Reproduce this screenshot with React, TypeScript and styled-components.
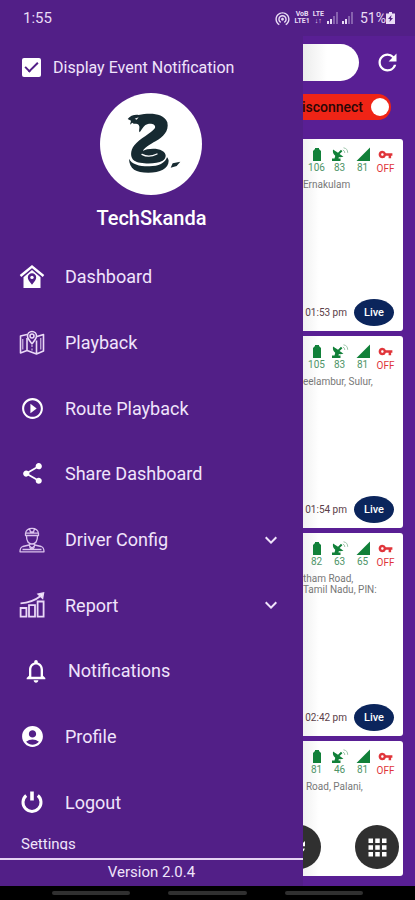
import React from "react";
import styled, { createGlobalStyle } from "styled-components";
import {
  MdAccountCircle,
  MdApps,
  MdExpandMore,
  MdNotificationsNone,
  MdPlayCircleOutline,
  MdRefresh,
  MdShare,
  MdVpnKey,
  MdWifiTethering,
} from "react-icons/md";

const GlobalStyle = createGlobalStyle`
  *, *::before, *::after { box-sizing: border-box; }
  body { margin: 0; background: #521f87; font-family: Roboto, "Liberation Sans", sans-serif; }
  button { font-family: inherit; border: 0; padding: 0; background: none; color: inherit; cursor: pointer; }
  svg { display: block; flex: none; }
`;

const Screen = styled.div`
  display: flex;
  flex-direction: column;
  min-height: 100vh;
  background: #591f94;
`;

const StatusBar = styled.header`
  display: flex;
  align-items: center;
  justify-content: space-between;
  height: 36px;
  padding: 0 20px 0 23px;
  background: #521f87;
  color: #e9dcf5;
  font-size: 15px;
`;

const StatusIcons = styled.div`
  display: flex;
  align-items: center;
  gap: 3px;
`;

const NetworkLabel = styled.span`
  font-size: 7px;
  line-height: 7px;
  font-weight: 700;
  text-align: center;
`;

const BatteryLevel = styled.span`
  display: flex;
  align-items: center;
  margin-left: 3px;
  font-size: 14px;
`;

const Body = styled.div`
  display: flex;
  flex: 1;
`;

const Drawer = styled.aside`
  display: flex;
  flex-direction: column;
  flex: 0 0 73%;
  background: #521f87;
  color: #f0e4fb;
`;

const DrawerHeader = styled.div`
  display: flex;
  flex-direction: column;
  align-items: center;
  height: 208px;
  padding-top: 19px;
`;

const EventToggle = styled.label`
  display: flex;
  align-items: center;
  align-self: stretch;
  gap: 12px;
  height: 24px;
  padding-left: 22px;
  font-size: 16px;
  cursor: pointer;
`;

const CheckInput = styled.input`
  appearance: none;
  display: grid;
  place-items: center;
  width: 19px;
  height: 19px;
  margin: 0;
  border-radius: 2px;
  background: #fff;

  &:checked::before {
    content: "";
    width: 13px;
    height: 7px;
    border-left: 2px solid #521f87;
    border-bottom: 2px solid #521f87;
    rotate: -45deg;
    translate: 0 -2px;
  }
`;

const Avatar = styled.div`
  width: 102px;
  height: 102px;
  margin-top: 14px;
  border-radius: 50%;
  background: #fff;
`;

const UserName = styled.h1`
  margin: 9px 0 0;
  font-size: 20px;
  line-height: 28px;
  font-weight: 500;
  color: #fff;
`;

const Menu = styled.nav`
  display: flex;
  flex-direction: column;
  flex: 1;
`;

const MenuItem = styled.button<{ $inset?: boolean }>`
  display: grid;
  grid-template-columns: 26px 1fr 24px;
  align-items: center;
  column-gap: 20px;
  flex: 1;
  padding: 0 20px 0 ${(p) => (p.$inset ? 22 : 19)}px;
  font-size: 18px;
  text-align: left;
`;

const MenuIcon = styled.span`
  display: grid;
  place-items: center;
  color: #fff;
`;

const SectionTitle = styled.h2`
  height: 15px;
  margin: 0 0 8px;
  padding-left: 21px;
  overflow: hidden;
  font-size: 15px;
  line-height: 18px;
  font-weight: 400;
`;

const Version = styled.footer`
  height: 28px;
  border-top: 2px solid #e5d3f3;
  font-size: 15px;
  line-height: 25px;
  text-align: center;
`;

const Content = styled.main`
  position: relative;
  display: flex;
  flex-direction: column;
  flex: 1;
  min-width: 0;
  padding: 8px 12px 10px 0;
`;

const SearchRow = styled.div`
  display: flex;
  align-items: center;
  gap: 15px;
  height: 37px;
`;

const SearchInput = styled.input`
  flex: 1;
  min-width: 0;
  height: 37px;
  padding: 0 16px;
  border: 0;
  border-radius: 0 19px 19px 0;
  background: linear-gradient(90deg, #ececec, #fff 24px);
  font: inherit;
`;

const RefreshButton = styled.button`
  color: #fff;
  width: 27px;
  margin-right: 2px;
`;

const ConnectionSwitch = styled.button`
  display: flex;
  align-items: center;
  justify-content: flex-end;
  gap: 8px;
  height: 26px;
  margin: 13px 12px 19px 0;
  padding-right: 2px;
  overflow: hidden;
  border-radius: 0 13px 13px 0;
  background: #ef2416;
  color: #2a0706;
  font-size: 14px;
  font-weight: 500;
`;

const Knob = styled.span`
  flex: none;
  width: 18px;
  height: 18px;
  border-radius: 50%;
  background: #fff;
`;

const CardList = styled.div`
  display: flex;
  flex-direction: column;
  flex: 1;
  gap: 5px;
`;

const Card = styled.article<{ $height?: number }>`
  display: flex;
  flex-direction: column;
  flex: ${(p) => (p.$height ? `0 0 ${p.$height}px` : "1")};
  padding: 8px 9px 5px 0;
  border-radius: 0 3px 3px 0;
  background: linear-gradient(90deg, #f1f1f1, #fff 16px);
  overflow: hidden;
`;

const Gauges = styled.div`
  display: grid;
  grid-template-columns: repeat(4, 23px);
  justify-content: end;
  margin-right: -3px;
`;

const Gauge = styled.div<{ $off?: boolean }>`
  display: flex;
  flex-direction: column;
  align-items: center;
  gap: 1px;
  color: ${(p) => (p.$off ? "#e0353a" : "#4e9468")};
  font-size: 10px;
  line-height: 12px;
`;

const Address = styled.p<{ $indent?: boolean }>`
  margin: 4px 0 0;
  padding-left: ${(p) => (p.$indent ? 3 : 0)}px;
  color: #777;
  font-size: 10px;
  line-height: 11px;
  white-space: nowrap;
`;

const CardFooter = styled.div`
  display: flex;
  align-items: center;
  justify-content: flex-end;
  gap: 7px;
  margin-top: auto;
`;

const Time = styled.time`
  color: #5b4048;
  font-size: 10px;
  white-space: nowrap;
`;

const LiveButton = styled.button`
  flex: none;
  width: 40px;
  height: 27px;
  border-radius: 50%;
  background: #0b255c;
  color: #fff;
  font-size: 11px;
  font-weight: 500;
`;

const FloatingActions = styled.div`
  position: absolute;
  right: 16px;
  bottom: 17px;
  left: 0;
  display: flex;
  justify-content: flex-end;
  gap: 34px;
  overflow: hidden;
`;

const FloatingButton = styled.button`
  display: grid;
  place-items: center;
  flex: none;
  width: 44px;
  height: 44px;
  border-radius: 50%;
  background: #303030;
  color: #fff;
`;

const NavBar = styled.footer`
  display: flex;
  justify-content: center;
  align-items: center;
  gap: 38px;
  height: 14px;
  padding: 0 52px;
  background: #000;
`;

const NavPill = styled.span`
  flex: 1;
  height: 4px;
  border-radius: 2px;
  background: #303030;
`;

const SnakeLogo = () => (
  <svg width="102" height="102" viewBox="-28 -23 306 306" fill="#172a31" role="img" aria-label="Snake">
    <path d="M55 55C62 46 75 41 88 43C120 37 162 36 174 65C180 92 160 110 140 121C120 132 104 142 101 151C112 144 142 141 158 150C173 158 172 172 160 180C140 192 90 190 75 180C62 172 62 150 75 134C90 114 126 98 137 82C140 72 128 68 116 70C104 72 100 84 91 95C86 90 95 78 86 71C80 66 76 73 69 66L62 72L65 60Z" />
    <path d="M98 161C112 169 131 166 143 160" fill="none" stroke="#fff" strokeWidth="4" strokeLinecap="round" />
    <path d="M59 174C60 205 80 216 117 216C152 216 178 204 178 180C177 175 175 172 173 170C168 188 145 198 117 197C90 197 66 190 59 174Z" />
    <path d="M184 201L190 188L213 183L202 196Z" />
    <path d="M76 54L88 50L82 57Z" fill="#fff" />
  </svg>
);

const HomePinIcon = () => (
  <svg width="26" height="26" viewBox="0 0 26 26">
    <path d="M1.5 12L13 2.5L24.5 12" fill="none" stroke="currentColor" strokeWidth="2.4" />
    <path d="M4.5 13.2L13 6L21.5 13.2V24H4.5Z" fill="currentColor" />
    <path d="M13 20.8C10.5 17.5 8.8 15.6 8.8 13.5a4.2 4.2 0 0 1 8.4 0C17.2 15.6 15.5 17.5 13 20.8Z" fill="#521f87" />
    <circle cx="13" cy="13.4" r="1.7" fill="currentColor" />
  </svg>
);

const MapIcon = () => (
  <svg width="26" height="26" viewBox="0 0 26 26" fill="none" stroke="#ead9f7" strokeWidth="1.6" strokeLinejoin="round">
    <path d="M8 4.5L1.5 6V23L8 20.5L17.5 24L24.5 21V4.5L18 6.5M8 8V20.5M17.5 10.5V24" />
    <path d="M13 13.8C10.5 10.7 8.5 8.5 8.5 6a4.5 4.5 0 0 1 9 0C17.5 8.5 15.5 10.7 13 13.8Z" />
    <circle cx="13" cy="6" r="2" />
    <path d="M13 15V17M13 18.5V20.5M3.8 9V19.5M21.8 8V19.5" strokeWidth="1" />
  </svg>
);

const DriverIcon = () => (
  <svg width="26" height="26" viewBox="0 0 26 26" fill="none" stroke="#dbc3ed" strokeWidth="1.3" strokeLinejoin="round">
    <path d="M6.5 8.5V6.5C7 2.8 9.5 1.3 13 1.3S19 2.8 19.5 6.5V8.5ZM10.5 1.8L11.5 5H14.5L15.5 1.8M6.5 6.2H19.5" />
    <path d="M7.5 8.5C7.3 14.5 9.7 17 13 17S18.7 14.5 18.5 8.5M10.5 16.5V19L13 21L15.5 19V16.5" />
    <path d="M10.2 18L3.8 19.5C1.5 20.2 1 21.8 1 24.8H25C25 21.8 24.5 20.2 22.2 19.5L15.8 18M10.5 19.5L11.8 22L13 21L14.2 22L15.5 19.5M3.5 22.5H22.5" />
  </svg>
);

const ReportIcon = () => (
  <svg width="26" height="26" viewBox="0 0 26 26" fill="none" stroke="#ead9f7" strokeWidth="1.8">
    <path d="M1.6 16H7.4V24.6H1.6ZM10 13.2H16V24.6H10ZM18.6 9.5H24.6V24.6H18.6Z" />
    <path d="M1.5 11.3C9.5 11 16 8.5 22 3.8" />
    <path d="M19.5 2.2L24.3 1.2L23.5 6Z" fill="#fff" />
  </svg>
);

const PowerIcon = () => (
  <svg width="26" height="26" viewBox="0 0 26 26" fill="none" stroke="currentColor">
    <path d="M7.2 6.5A9 9 0 1 0 18.8 6.5" strokeWidth="3" />
    <path d="M13 2.5V11.5" strokeWidth="3.6" />
  </svg>
);

const BatteryIcon = () => (
  <svg width="14" height="14" viewBox="0 0 14 14" fill="#118039">
    <path d="M5 2V1H9V2L11 4V14H3V4Z" />
  </svg>
);

const DishIcon = () => (
  <svg width="18" height="14" viewBox="0 0 18 14">
    <path d="M2 2.5C1 8 6 11.5 12.5 9.8L8.6 7L11.4 4.2L10 2.8L7 5.8Z" fill="#118039" />
    <path d="M4.5 8L3.5 11.5H1V14H9.5V11.5H7.5L8 9.5Z" fill="#118039" />
    <path d="M11.8 3a3 3 0 0 1 2 3M12.5 .8a5 5 0 0 1 4.2 5" fill="none" stroke="#9cc4a9" />
  </svg>
);

const SignalIcon = () => (
  <svg width="14" height="14" viewBox="0 0 14 14" fill="#118039">
    <path d="M14 0.5V14H0.5Z" />
  </svg>
);

const StatusSignalIcon = () => (
  <svg width="12" height="12" viewBox="0 0 12 12" fill="currentColor">
    <path d="M0 9H2V12H0ZM3 7H5V12H3Z" />
    <path d="M6 4H8V12H6ZM9 0H11V12H9Z" opacity="0.35" />
  </svg>
);

const ChargingIcon = () => (
  <svg width="9" height="12" viewBox="0 0 9 12">
    <path d="M3 0H6V1.5H9V12H0V1.5H3Z" fill="currentColor" />
    <path d="M5.5 3L2 7H4L3.5 10L7 6H5Z" fill="#521f87" />
  </svg>
);

const menu: { label: string; icon: React.ReactNode; inset?: boolean; expandable?: boolean }[] = [
  { label: "Dashboard", icon: <HomePinIcon /> },
  { label: "Playback", icon: <MapIcon /> },
  { label: "Route Playback", icon: <MdPlayCircleOutline size={25} /> },
  { label: "Share Dashboard", icon: <MdShare size={25} /> },
  { label: "Driver Config", icon: <DriverIcon />, expandable: true },
  { label: "Report", icon: <ReportIcon />, expandable: true },
  { label: "Notifications", icon: <MdNotificationsNone size={28} />, inset: true },
  { label: "Profile", icon: <MdAccountCircle size={25} /> },
  { label: "Logout", icon: <PowerIcon /> },
];

const vehicles = [
  { battery: 106, satellites: 83, signal: 81, address: ["Ernakulam"], time: "01:53 pm", height: 192 },
  { battery: 105, satellites: 83, signal: 81, address: ["eelambur, Sulur,"], time: "01:54 pm", height: 192 },
  { battery: 82, satellites: 63, signal: 65, address: ["tham Road,", "Tamil Nadu, PIN:"], time: "02:42 pm", height: 203 },
  { battery: 81, satellites: 46, signal: 81, address: ["Road, Palani,"], indent: true },
];

export default function App() {
  return (
    <Screen>
      <GlobalStyle />
      <StatusBar>
        <span>1:55</span>
        <StatusIcons>
          <MdWifiTethering size={17} />
          <NetworkLabel>VoB<br />LTE1</NetworkLabel>
          <NetworkLabel>LTE<br />↓↑</NetworkLabel>
          <StatusSignalIcon />
          <StatusSignalIcon />
          <BatteryLevel>51%<ChargingIcon /></BatteryLevel>
        </StatusIcons>
      </StatusBar>
      <Body>
        <Drawer>
          <DrawerHeader>
            <EventToggle>
              <CheckInput type="checkbox" defaultChecked />
              Display Event Notification
            </EventToggle>
            <Avatar><SnakeLogo /></Avatar>
            <UserName>TechSkanda</UserName>
          </DrawerHeader>
          <Menu>
            {menu.map((item) => (
              <MenuItem key={item.label} type="button" $inset={item.inset}>
                <MenuIcon>{item.icon}</MenuIcon>
                <span>{item.label}</span>
                {item.expandable && <MdExpandMore size={24} />}
              </MenuItem>
            ))}
          </Menu>
          <SectionTitle>Settings</SectionTitle>
          <Version>Version 2.0.4</Version>
        </Drawer>
        <Content>
          <SearchRow>
            <SearchInput type="search" aria-label="Search vehicles" />
            <RefreshButton type="button" aria-label="Refresh"><MdRefresh size={27} /></RefreshButton>
          </SearchRow>
          <ConnectionSwitch type="button" role="switch" aria-checked="true">
            Disconnect
            <Knob />
          </ConnectionSwitch>
          <CardList>
            {vehicles.map((v, i) => (
              <Card key={i} $height={v.height}>
                <Gauges>
                  <Gauge><BatteryIcon />{v.battery}</Gauge>
                  <Gauge><DishIcon />{v.satellites}</Gauge>
                  <Gauge><SignalIcon />{v.signal}</Gauge>
                  <Gauge $off><MdVpnKey size={15} />OFF</Gauge>
                </Gauges>
                <Address $indent={v.indent}>
                  {v.address.map((line) => (
                    <React.Fragment key={line}>{line}<br /></React.Fragment>
                  ))}
                </Address>
                {v.time && (
                  <CardFooter>
                    <Time>{v.time}</Time>
                    <LiveButton type="button">Live</LiveButton>
                  </CardFooter>
                )}
              </Card>
            ))}
          </CardList>
          <FloatingActions>
            <FloatingButton type="button" aria-label="Reload"><MdRefresh size={18} /></FloatingButton>
            <FloatingButton type="button" aria-label="Apps"><MdApps size={27} /></FloatingButton>
          </FloatingActions>
        </Content>
      </Body>
      <NavBar>
        <NavPill />
        <NavPill />
        <NavPill />
      </NavBar>
    </Screen>
  );
}
